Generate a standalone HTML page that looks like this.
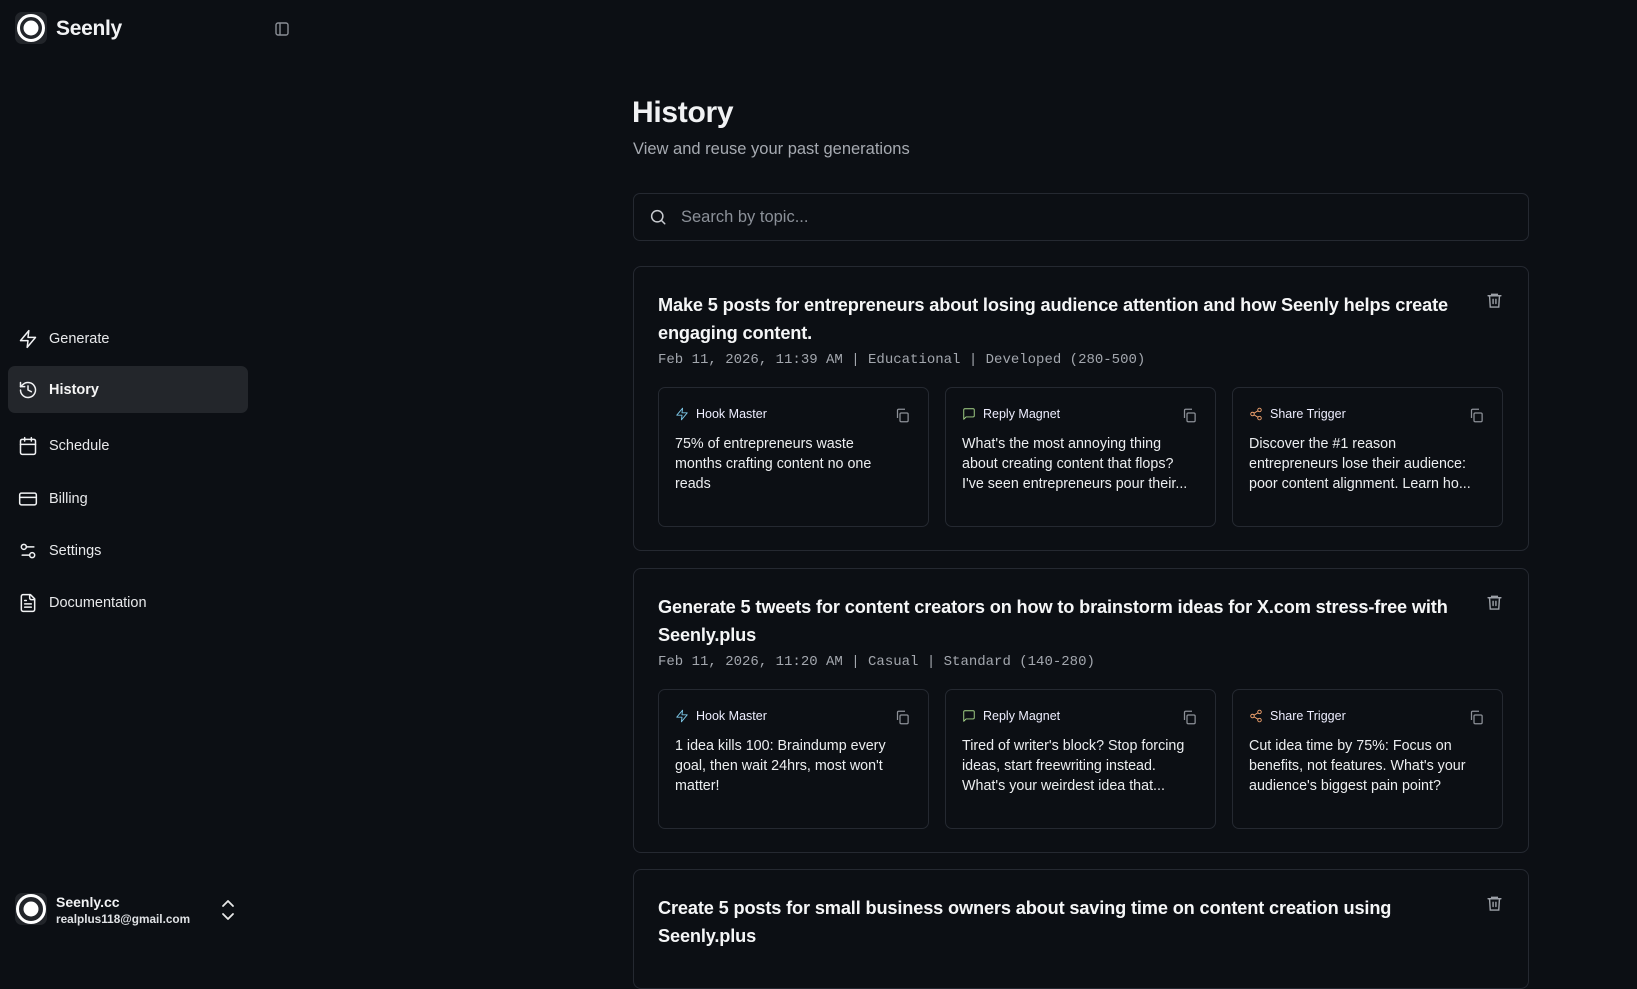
<!DOCTYPE html>
<html><head><meta charset="utf-8"><style>
*{box-sizing:border-box;margin:0;padding:0}
body{width:1637px;height:942px;background:#0c0f14;color:#f1f2f4;font-family:"Liberation Sans",sans-serif;position:relative;overflow:hidden}
.a{position:absolute}
.nav{position:absolute;left:18px;display:flex;align-items:center;gap:11px;font-size:14.5px;color:#e8e9eb}
.nav svg{width:20px;height:20px;stroke:#f1f2f4;fill:none;stroke-width:1.8;stroke-linecap:round;stroke-linejoin:round}
.card{position:absolute;left:633px;width:896px;border:1px solid #252931;border-radius:8px;background:#0c0f14}
.title{position:absolute;left:24px;top:24px;font-weight:bold;font-size:18.2px;letter-spacing:-0.15px;line-height:28px;white-space:nowrap;color:#f5f6f7}
.meta{position:absolute;left:24px;font-family:"Liberation Mono",monospace;font-size:14px;color:#a3a7ae;white-space:nowrap}
.trash{position:absolute;right:25px;top:24px;width:17px;height:18px}
.sub{position:absolute;top:120px;width:271px;height:140px;border:1px solid #252931;border-radius:7px}
.sh{position:absolute;left:16px;top:19px;display:flex;align-items:center;gap:7px;font-size:12.5px;color:#eef}
.sh svg{width:14px;height:14px;fill:none;stroke-width:1.6;stroke-linecap:round;stroke-linejoin:round}
.cp{position:absolute;right:18px;top:20px;width:15px;height:15px}
.sb{position:absolute;left:16px;top:46px;font-size:14.3px;line-height:20px;white-space:nowrap;color:#eceef0}
</style></head><body>
<svg class="a" style="left:15px;top:12px" width="32" height="32" viewBox="0 0 32 32"><rect width="32" height="32" rx="7" fill="#22252a"/><circle cx="16" cy="16" r="12.5" fill="none" stroke="#fff" stroke-width="3"/><circle cx="16" cy="16" r="7.5" fill="#fff"/></svg>
<div class="a" style="left:56px;top:17px;font-size:21px;font-weight:bold;letter-spacing:-0.3px">Seenly</div>
<svg class="a" style="left:275px;top:22px" width="14" height="14" viewBox="0 0 14 14" fill="none" stroke="#8a8e95" stroke-width="1.4"><rect x="1" y="1" width="12" height="12" rx="2"/><path d="M5 1v12"/></svg>

<div class="nav" style="top:329px"><svg viewBox="0 0 24 24"><path d="M13 2L3 14h9l-1 8 10-12h-9l1-8z"/></svg>Generate</div>
<div class="a" style="left:8px;top:366px;width:240px;height:47px;background:#23262b;border-radius:7px"></div>
<div class="nav" style="top:380px"><svg viewBox="0 0 24 24"><path d="M3 12a9 9 0 1 0 3-6.7L3 8"/><path d="M3 3v5h5"/><path d="M12 7v5l4 2"/></svg><b style="font-weight:bold;color:#f5f5f5">History</b></div>
<div class="nav" style="top:436px"><svg viewBox="0 0 24 24"><rect x="3" y="4" width="18" height="18" rx="2"/><path d="M16 2v4M8 2v4M3 10h18"/></svg>Schedule</div>
<div class="nav" style="top:489px"><svg viewBox="0 0 24 24"><rect x="2" y="5" width="20" height="14" rx="2"/><path d="M2 10h20"/></svg>Billing</div>
<div class="nav" style="top:541px"><svg viewBox="0 0 24 24"><path d="M14 17H5M19 7h-9"/><circle cx="17" cy="17" r="3"/><circle cx="7" cy="7" r="3"/></svg>Settings</div>
<div class="nav" style="top:593px"><svg viewBox="0 0 24 24"><path d="M15 2H6a2 2 0 0 0-2 2v16a2 2 0 0 0 2 2h12a2 2 0 0 0 2-2V7z"/><path d="M14 2v4a2 2 0 0 0 2 2h4M10 9H8M16 13H8M16 17H8"/></svg>Documentation</div>

<svg class="a" style="left:15px;top:893px" width="32" height="32" viewBox="0 0 32 32"><rect width="32" height="32" rx="7" fill="#22252a"/><circle cx="16" cy="16" r="13.5" fill="none" stroke="#fff" stroke-width="3"/><circle cx="16" cy="16" r="7.5" fill="#fff"/></svg>
<div class="a" style="left:56px;top:894px;font-size:14px;font-weight:bold">Seenly.cc</div>
<div class="a" style="left:56px;top:912px;font-size:11.8px;font-weight:bold;color:#dfe1e4">realplus118@gmail.com</div>
<svg class="a" style="left:220px;top:899px" width="16" height="22" viewBox="0 0 16 22" fill="none" stroke="#e8e8e8" stroke-width="1.8" stroke-linecap="round" stroke-linejoin="round"><path d="M3 7l5-5 5 5M3 15l5 5 5-5"/></svg>

<div class="a" style="left:632px;top:96px;font-size:30px;font-weight:bold;letter-spacing:-0.3px">History</div>
<div class="a" style="left:633px;top:140px;font-size:16.5px;color:#a6aab1">View and reuse your past generations</div>
<div class="a" style="left:633px;top:193px;width:896px;height:48px;border:1px solid #252931;border-radius:7px"></div>
<svg class="a" style="left:649px;top:208px" width="18" height="18" viewBox="0 0 24 24" fill="none" stroke="#c8cbd0" stroke-width="2" stroke-linecap="round"><circle cx="11" cy="11" r="7.5"/><path d="M21 21l-4.5-4.5"/></svg>
<div class="a" style="left:681px;top:208px;font-size:16.5px;color:#8b9098">Search by topic...</div>

<!-- card 1 -->
<div class="card" style="top:266px;height:285px">
<div class="title">Make 5 posts for entrepreneurs about losing audience attention and how Seenly helps create<br>engaging content.</div>
<div class="meta" style="top:85px">Feb 11, 2026, 11:39 AM | Educational | Developed (280-500)</div>
<svg class="trash" viewBox="0 0 24 24" fill="none" stroke="#9ca0a7" stroke-width="2" stroke-linecap="round"><path d="M3 6h18M8 6V4h8v2M5 6l1 16h12l1-16M10 11v6M14 11v6"/></svg>
<div class="sub" style="left:24px"><div class="sh"><svg viewBox="0 0 24 24" stroke="#7cc6e6"><path d="M13 2L3 14h9l-1 8 10-12h-9l1-8z"/></svg>Hook Master</div><svg class="cp" viewBox="0 0 24 24" fill="none" stroke="#8d9198" stroke-width="2"><rect x="8" y="8" width="13" height="14" rx="2"/><path d="M4 16V4a2 2 0 0 1 2-2h10"/></svg><div class="sb">75% of entrepreneurs waste<br>months crafting content no one<br>reads</div></div>
<div class="sub" style="left:311px"><div class="sh"><svg viewBox="0 0 24 24" stroke="#a8d88a"><path d="M21 15a2 2 0 0 1-2 2H7l-4 4V5a2 2 0 0 1 2-2h14a2 2 0 0 1 2 2z"/></svg>Reply Magnet</div><svg class="cp" viewBox="0 0 24 24" fill="none" stroke="#8d9198" stroke-width="2"><rect x="8" y="8" width="13" height="14" rx="2"/><path d="M4 16V4a2 2 0 0 1 2-2h10"/></svg><div class="sb">What's the most annoying thing<br>about creating content that flops?<br>I've seen entrepreneurs pour their...</div></div>
<div class="sub" style="left:598px"><div class="sh"><svg viewBox="0 0 24 24" stroke="#f5a56f"><circle cx="18" cy="5" r="3"/><circle cx="6" cy="12" r="3"/><circle cx="18" cy="19" r="3"/><path d="M8.6 13.5l6.8 4M15.4 6.5l-6.8 4"/></svg>Share Trigger</div><svg class="cp" viewBox="0 0 24 24" fill="none" stroke="#8d9198" stroke-width="2"><rect x="8" y="8" width="13" height="14" rx="2"/><path d="M4 16V4a2 2 0 0 1 2-2h10"/></svg><div class="sb">Discover the #1 reason<br>entrepreneurs lose their audience:<br>poor content alignment. Learn ho...</div></div>
</div>

<!-- card 2 -->
<div class="card" style="top:568px;height:285px">
<div class="title">Generate 5 tweets for content creators on how to brainstorm ideas for X.com stress-free with<br>Seenly.plus</div>
<div class="meta" style="top:85px">Feb 11, 2026, 11:20 AM | Casual | Standard (140-280)</div>
<svg class="trash" viewBox="0 0 24 24" fill="none" stroke="#9ca0a7" stroke-width="2" stroke-linecap="round"><path d="M3 6h18M8 6V4h8v2M5 6l1 16h12l1-16M10 11v6M14 11v6"/></svg>
<div class="sub" style="left:24px"><div class="sh"><svg viewBox="0 0 24 24" stroke="#7cc6e6"><path d="M13 2L3 14h9l-1 8 10-12h-9l1-8z"/></svg>Hook Master</div><svg class="cp" viewBox="0 0 24 24" fill="none" stroke="#8d9198" stroke-width="2"><rect x="8" y="8" width="13" height="14" rx="2"/><path d="M4 16V4a2 2 0 0 1 2-2h10"/></svg><div class="sb">1 idea kills 100: Braindump every<br>goal, then wait 24hrs, most won't<br>matter!</div></div>
<div class="sub" style="left:311px"><div class="sh"><svg viewBox="0 0 24 24" stroke="#a8d88a"><path d="M21 15a2 2 0 0 1-2 2H7l-4 4V5a2 2 0 0 1 2-2h14a2 2 0 0 1 2 2z"/></svg>Reply Magnet</div><svg class="cp" viewBox="0 0 24 24" fill="none" stroke="#8d9198" stroke-width="2"><rect x="8" y="8" width="13" height="14" rx="2"/><path d="M4 16V4a2 2 0 0 1 2-2h10"/></svg><div class="sb">Tired of writer's block? Stop forcing<br>ideas, start freewriting instead.<br>What's your weirdest idea that...</div></div>
<div class="sub" style="left:598px"><div class="sh"><svg viewBox="0 0 24 24" stroke="#f5a56f"><circle cx="18" cy="5" r="3"/><circle cx="6" cy="12" r="3"/><circle cx="18" cy="19" r="3"/><path d="M8.6 13.5l6.8 4M15.4 6.5l-6.8 4"/></svg>Share Trigger</div><svg class="cp" viewBox="0 0 24 24" fill="none" stroke="#8d9198" stroke-width="2"><rect x="8" y="8" width="13" height="14" rx="2"/><path d="M4 16V4a2 2 0 0 1 2-2h10"/></svg><div class="sb">Cut idea time by 75%: Focus on<br>benefits, not features. What's your<br>audience's biggest pain point?</div></div>
</div>

<!-- card 3 -->
<div class="card" style="top:869px;height:120px">
<div class="title">Create 5 posts for small business owners about saving time on content creation using<br>Seenly.plus</div>
<svg class="trash" viewBox="0 0 24 24" fill="none" stroke="#9ca0a7" stroke-width="2" stroke-linecap="round"><path d="M3 6h18M8 6V4h8v2M5 6l1 16h12l1-16M10 11v6M14 11v6"/></svg>
</div>
</body></html>
